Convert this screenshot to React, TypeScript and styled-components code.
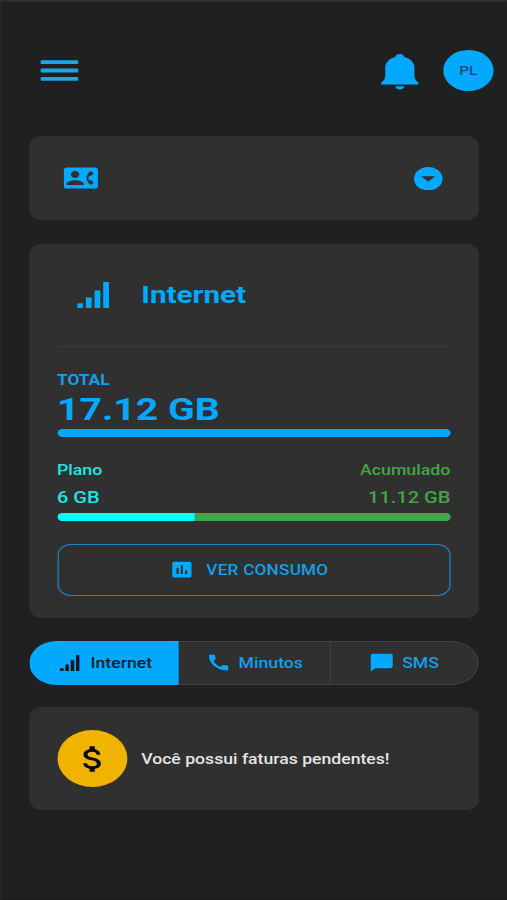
import React from "react";
import styled, { createGlobalStyle } from "styled-components";
import {
  MdAssessment,
  MdAttachMoney,
  MdCall,
  MdChatBubble,
  MdContactPhone,
} from "react-icons/md";

const blue = "#03a9ff";
const textBlue = "#149fe8";
const cyan = "#03ffff";
const green = "#43a545";
const surface = "#303030";

const GlobalStyle = createGlobalStyle`
  *, *::before, *::after { box-sizing: border-box; }
  html, body { margin: 0; background: #202020; overflow: hidden; }
`;

const Screen = styled.main`
  width: 414px;
  height: 900px;
  transform: scaleX(1.2246);
  transform-origin: 0 0;
  background: #202020;
  border-top: 2px solid #2e2e2f;
  border-left: 1px solid #292929;
  border-bottom: 1px solid #191919;
  padding: 0 23.4px 0 22.5px;
  font-family: Roboto, "Liberation Sans", sans-serif;
  display: flex;
  flex-direction: column;
  svg { display: block; flex: none; }
`;

const Header = styled.header`
  height: 133.5px;
  margin-right: -12px;
  padding: 48px 0 0 9.3px;
  display: flex;
  align-items: flex-start;
`;

const IconButton = styled.button<{ $top: number }>`
  border: 0;
  padding: 0;
  margin-top: ${(p) => p.$top}px;
  background: none;
  color: ${blue};
`;

const HeaderActions = styled.div`
  margin-left: auto;
  display: flex;
  gap: 20.4px;
`;

const Avatar = styled.div`
  width: 40.6px;
  height: 40.6px;
  border-radius: 50%;
  background: ${blue};
  color: #0b4a78;
  font-size: 12.5px;
  font-weight: 500;
  display: flex;
  align-items: center;
  justify-content: center;
`;

const Card = styled.section`
  background: ${surface};
  border-radius: 10px;
  flex: none;
`;

const LineSelector = styled(Card)`
  height: 84.9px;
  padding: 1px 29px 0 28.7px;
  display: flex;
  align-items: center;
  justify-content: space-between;
  color: ${blue};
`;

const UsageCard = styled(Card)`
  height: 374.6px;
  margin-top: 23.5px;
  padding: 0 22.8px 0 23px;
`;

const UsageHeader = styled.div`
  height: 103px;
  padding-left: 16.3px;
  border-bottom: 1px solid #3a3a3a;
  display: flex;
  align-items: center;
  gap: 26.6px;
  color: ${blue};
`;

const Title = styled.h1`
  margin: 0;
  font-size: 24.2px;
  line-height: 28px;
  font-weight: 700;
`;

const TotalLabel = styled.div`
  margin-top: 25px;
  font-size: 14.1px;
  line-height: 16px;
  font-weight: 700;
  color: ${textBlue};
`;

const TotalValue = styled.div`
  height: 41px;
  font-size: 32px;
  line-height: 43px;
  font-weight: 700;
  color: ${blue};
`;

const Bar = styled.div`
  height: 8.4px;
  border-radius: 4px;
  background: ${blue};
  display: flex;
  overflow: hidden;
`;

const BarPart = styled.span<{ $color: string; $share: number }>`
  flex: ${(p) => p.$share} 0 0;
  background: ${(p) => p.$color};
`;

const Split = styled.div`
  height: 75.6px;
  padding-top: 25px;
  display: flex;
  justify-content: space-between;
`;

const Share = styled.div<{ $color: string; $right?: boolean }>`
  color: ${(p) => p.$color};
  text-align: ${(p) => (p.$right ? "right" : "left")};
  font-weight: 500;
`;

const ShareName = styled.div`
  font-size: 14.5px;
  line-height: 18px;
`;

const ShareValue = styled.div`
  margin-top: 7.4px;
  font-size: 16.4px;
  line-height: 20px;
`;

const DetailsButton = styled.button`
  width: 100%;
  height: 52px;
  margin-top: 22.6px;
  padding: 0 8px 0 0;
  border: 1.4px solid #1c86c5;
  border-radius: 11px;
  background: none;
  color: ${textBlue};
  font: 500 14px/18px Roboto, "Liberation Sans", sans-serif;
  letter-spacing: 0.2px;
  display: flex;
  align-items: center;
  justify-content: center;
  gap: 9.4px;
  svg { color: ${blue}; }
`;

const Tabs = styled.nav`
  height: 44px;
  margin-top: 22.5px;
  border-radius: 22px;
  flex: none;
  overflow: hidden;
  display: grid;
  grid-template-columns: 122.5px 123px 1fr;
`;

const Tab = styled.button<{ $active?: boolean; $last?: boolean; $gap: number }>`
  border: 0 solid #424242;
  border-width: ${(p) => (p.$active ? "0" : p.$last ? "1.3px" : "1.3px 0")};
  border-radius: ${(p) => (p.$last ? "0 22px 22px 0" : "0")};
  padding: ${(p) => (p.$active ? "0 0 0 4px" : "0")};
  background: ${(p) => (p.$active ? blue : surface)};
  color: ${(p) => (p.$active ? "#06202f" : textBlue)};
  font: 500 14.4px/18px Roboto, "Liberation Sans", sans-serif;
  display: flex;
  align-items: center;
  justify-content: center;
  gap: ${(p) => p.$gap}px;
  svg { color: ${(p) => (p.$active ? "#04151f" : blue)}; }
`;

const TabLabel = styled.span`
  padding-top: 2px;
`;

const Notice = styled(Card)`
  height: 102.5px;
  margin-top: 22.5px;
  padding-left: 23px;
  display: flex;
  align-items: center;
  gap: 11.4px;
  color: #e4e4e4;
  font-size: 14.4px;
  font-weight: 500;
`;

const NoticeText = styled.p`
  margin: 0;
  padding-top: 1.4px;
`;

const Coin = styled.div`
  width: 57.4px;
  height: 57.4px;
  padding-left: 1px;
  border-radius: 50%;
  background: #f0b400;
  color: #080600;
  display: flex;
  align-items: center;
  justify-content: center;
`;

const Signal = ({ size }: { size: number }) => (
  <svg width={size} height={size} viewBox="0 0 26 26" fill="currentColor">
    <rect x="0" y="21.3" width="4.7" height="4.7" />
    <rect x="7.1" y="15.5" width="4.7" height="10.5" />
    <rect x="14.2" y="8.4" width="4.7" height="17.6" />
    <rect x="21.3" y="0" width="4.7" height="26" />
  </svg>
);

const MenuIcon = () => (
  <svg width="31" height="22" viewBox="0 0 31 22" fill="#1ea5e9">
    <rect y="0.3" width="31" height="3.8" rx="1.2" />
    <rect y="8.6" width="31" height="3.8" rx="1.2" />
    <rect y="16.9" width="31" height="3.8" rx="1.2" />
  </svg>
);

const BellIcon = () => (
  <svg width="31" height="36" viewBox="0 0 31 36" fill="currentColor">
    <path d="M15.5 0C13.4 0 12.2 1.3 11.8 3.1C6.8 4.7 3.6 8.6 3.6 13.8V22.2C3.6 24.6 2.6 26 0.4 28.6C-0.1 29.5 0.2 30.4 1.1 30.4H29.9C30.8 30.4 31.1 29.5 30.6 28.6C28.4 26 27.4 24.6 27.4 22.2V13.8C27.4 8.6 24.2 4.7 19.2 3.1C18.8 1.3 17.6 0 15.5 0Z" />
    <path d="M11.8 32.3H19.2C18.8 34.4 17.4 35.5 15.5 35.5C13.6 35.5 12.2 34.4 11.8 32.3Z" />
  </svg>
);

const ExpandIcon = () => (
  <svg width="23.4" height="23.4" viewBox="0 0 24 24">
    <circle cx="12" cy="12" r="12" fill={blue} />
    <path d="M6.2 9.4H17.8L12 15.2Z" fill={surface} />
  </svg>
);

const plan = 6;
const rollover = 11.12;

export default function App() {
  return (
    <>
      <GlobalStyle />
      <Screen>
        <Header>
          <IconButton $top={9.8} aria-label="Menu"><MenuIcon /></IconButton>
          <HeaderActions>
            <IconButton $top={3} aria-label="Notificações"><BellIcon /></IconButton>
            <Avatar>PL</Avatar>
          </HeaderActions>
        </Header>

        <LineSelector>
          <MdContactPhone size={28} />
          <ExpandIcon />
        </LineSelector>

        <UsageCard>
          <UsageHeader>
            <Signal size={26} />
            <Title>Internet</Title>
          </UsageHeader>
          <TotalLabel>TOTAL</TotalLabel>
          <TotalValue>17.12 GB</TotalValue>
          <Bar />
          <Split>
            <Share $color="#20e5e5">
              <ShareName>Plano</ShareName>
              <ShareValue>{plan} GB</ShareValue>
            </Share>
            <Share $color={green} $right>
              <ShareName>Acumulado</ShareName>
              <ShareValue>{rollover} GB</ShareValue>
            </Share>
          </Split>
          <Bar>
            <BarPart $color={cyan} $share={plan} />
            <BarPart $color={green} $share={rollover} />
          </Bar>
          <DetailsButton>
            <MdAssessment size={21} />
            VER CONSUMO
          </DetailsButton>
        </UsageCard>

        <Tabs>
          <Tab $active $gap={8.6}><Signal size={16} /><TabLabel>Internet</TabLabel></Tab>
          <Tab $gap={6.2}><MdCall size={21} /><TabLabel>Minutos</TabLabel></Tab>
          <Tab $last $gap={5.8}><MdChatBubble size={21.5} /><TabLabel>SMS</TabLabel></Tab>
        </Tabs>

        <Notice>
          <Coin><MdAttachMoney size={34} /></Coin>
          <NoticeText>Você possui faturas pendentes!</NoticeText>
        </Notice>
      </Screen>
    </>
  );
}
